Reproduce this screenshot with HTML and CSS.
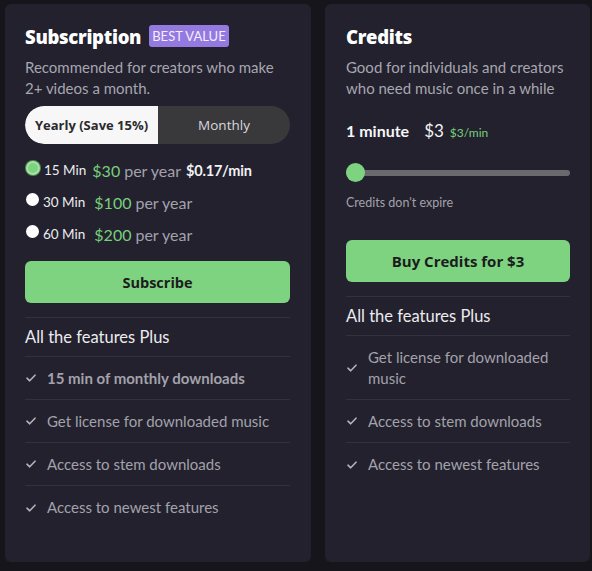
FILE: index.html
```html
<!DOCTYPE html>
<html>
<head>
<meta charset="utf-8">
<link rel="stylesheet" href="styles.css">
</head>
<body>
<div class="wrap">
  <section class="card card-sub">
    <div class="head">
      <h2 class="title">Subscription</h2>
      <span class="badge">BEST VALUE</span>
    </div>
    <p class="desc">Recommended for creators who make 2+ videos a month.</p>
    <div class="toggle">
      <div class="tog tog-on">Yearly (Save 15%)</div>
      <div class="tog tog-off">Monthly</div>
    </div>
    <ul class="plans">
      <li class="plan"><span class="radio radio-on"></span><span class="mins">15 Min</span><span class="price">$30</span><span class="per">per year</span><span class="rate">$0.17/min</span></li>
      <li class="plan"><span class="radio"></span><span class="mins">30 Min</span><span class="price wide">$100</span><span class="per">per year</span></li>
      <li class="plan"><span class="radio"></span><span class="mins">60 Min</span><span class="price wide">$200</span><span class="per">per year</span></li>
    </ul>
    <button class="btn btn-sub">Subscribe</button>
    <div class="plus">All the features Plus</div>
    <ul class="feats">
      <li class="feat strong"><svg class="chk" viewBox="0 0 10 8"><path d="M1 4.2 L3.7 6.8 L9 1.2" /></svg><span>15 min of monthly downloads</span></li>
      <li class="feat"><svg class="chk" viewBox="0 0 10 8"><path d="M1 4.2 L3.7 6.8 L9 1.2" /></svg><span>Get license for downloaded music</span></li>
      <li class="feat"><svg class="chk" viewBox="0 0 10 8"><path d="M1 4.2 L3.7 6.8 L9 1.2" /></svg><span>Access to stem downloads</span></li>
      <li class="feat last"><svg class="chk" viewBox="0 0 10 8"><path d="M1 4.2 L3.7 6.8 L9 1.2" /></svg><span>Access to newest features</span></li>
    </ul>
  </section>
  <section class="card card-cred">
    <div class="head">
      <h2 class="title">Credits</h2>
    </div>
    <p class="desc">Good for individuals and creators who need music once in a while</p>
    <div class="amount"><span class="amt-min">1 minute</span><span class="amt-price">$3</span><span class="amt-rate">$3/min</span></div>
    <div class="slider"><span class="thumb"></span></div>
    <p class="note">Credits don't expire</p>
    <button class="btn btn-buy">Buy Credits for $3</button>
    <div class="plus">All the features Plus</div>
    <ul class="feats">
      <li class="feat"><svg class="chk" viewBox="0 0 10 8"><path d="M1 4.2 L3.7 6.8 L9 1.2" /></svg><span>Get license for downloaded music</span></li>
      <li class="feat"><svg class="chk" viewBox="0 0 10 8"><path d="M1 4.2 L3.7 6.8 L9 1.2" /></svg><span>Access to stem downloads</span></li>
      <li class="feat last"><svg class="chk" viewBox="0 0 10 8"><path d="M1 4.2 L3.7 6.8 L9 1.2" /></svg><span>Access to newest features</span></li>
    </ul>
  </section>
</div>
</body>
</html>
```

FILE: styles.css
```css
* { box-sizing: border-box; }
html, body { margin: 0; padding: 0; }
body {
  background: #16151b;
  font-family: Lato, "Noto Sans", sans-serif;
  width: 592px;
  height: 571px;
  overflow: hidden;
}
.wrap {
  display: flex;
  gap: 14px;
  padding: 4px 2px 0 5px;
}
.card {
  background: #22212d;
  border-radius: 6px;
  height: 558px;
  padding: 20px 21px 0 20px;
}
.card-sub { width: 306px; }
.card-cred { width: 265px; padding-left: 21px; padding-right: 20px; }

.head { display: flex; align-items: center; gap: 8px; height: 26px; }
.title {
  margin: 0;
  font-family: "Open Sans", sans-serif;
  font-weight: 800;
  font-size: 18.5px;
  line-height: 26px;
  color: #ffffff;
  letter-spacing: -0.3px;
}
.badge {
  background: #9479e0;
  color: #f2eefc;
  font-size: 13px;
  height: 22px;
  line-height: 22px;
  padding: 0 3px;
  border-radius: 3px;
  font-family: Lato, sans-serif;
  margin-top: -2px;
}
.desc {
  margin: 7px 0 0 0;
  font-size: 15px;
  line-height: 21px;
  color: #a7a6b0;
}
.toggle {
  margin-top: 7px;
  height: 38px;
  display: flex;
  border-radius: 19px;
  background: #39393c;
  overflow: hidden;
}
.tog {
  display: flex;
  align-items: center;
  justify-content: center;
  font-size: 13px;
}
.tog-on {
  width: 133px;
  background: #f7f7f7;
  color: #2a2a2e;
  font-family: "Open Sans", sans-serif;
  font-weight: 700;
  border-radius: 19px 0 0 19px;
}
.tog-off { flex: 1; color: #d8d8dc; font-family: "Open Sans", sans-serif; font-weight: 500; font-size: 13.5px; }

.plans { list-style: none; margin: 10px 0 0 0; padding: 0; }
.plan {
  height: 32px;
  display: flex;
  align-items: center;
  color: #e6e6ea;
}
.radio {
  width: 13px;
  height: 13px;
  border-radius: 50%;
  background: #ffffff;
  margin: -5px 4px 0 1px;
  flex: none;
}
.radio-on {
  width: 14px;
  height: 14px;
  background: #7dd380;
  border: 2px solid #a6e2a7;
  box-shadow: 0 0 0 1px #4f8a52;
  margin-left: 1px;
}
.mins { font-size: 13.5px; color: #ececf0; margin-right: 6px; }
.price { font-size: 16px; color: #79cf7b; margin-right: 4px; }
.price.wide { margin-left: 3px; }
.per { font-size: 16px; color: #a3a2ab; margin-right: 5px; }
.rate { font-size: 14.5px; font-weight: 700; color: #f2f2f4; letter-spacing: -0.2px; }

.btn {
  display: block;
  width: 100%;
  height: 42px;
  border: none;
  border-radius: 6px;
  background: #7dd380;
  color: #1c1c1e;
  font-family: "Open Sans", sans-serif;
  font-weight: 700;
  font-size: 14.5px;
  padding: 0;
}
.btn-sub { margin-top: 11px; }

.plus {
  margin-top: 14px;
  border-top: 1px solid #32313e;
  border-bottom: 1px solid #32313e;
  height: 40px;
  display: flex;
  align-items: center;
  font-size: 16.5px;
  color: #ececef;
}
.feats { list-style: none; margin: 0; padding: 0; }
.feat {
  display: flex;
  align-items: center;
  min-height: 43px;
  padding: 10px 0;
  border-bottom: 1px solid #32313e;
  font-size: 15px;
  line-height: 21px;
  color: #a3a2ab;
}
.feat.last { border-bottom: none; }
.feat.strong { font-weight: 700; }
.chk {
  width: 10px;
  height: 8px;
  flex: none;
  margin: 0 11px 0 1px;
  fill: none;
  stroke: #b4b3bb;
  stroke-width: 1.6;
  stroke-linecap: round;
  stroke-linejoin: round;
}

.amount { margin-top: 21px; height: 24px; display: flex; align-items: baseline; }
.amt-min { font-size: 16px; font-weight: 700; color: #f6f6f8; margin-right: 15px; }
.amt-price { font-size: 17px; color: #f2f2f4; margin-right: 6px; }
.amt-rate { font-size: 12px; color: #79cf7b; }
.slider {
  margin-top: 19px;
  height: 19px;
  display: flex;
  align-items: center;
  position: relative;
}
.slider::before {
  content: "";
  display: block;
  width: 100%;
  height: 6px;
  border-radius: 3px;
  background: #6a6a6e;
}
.thumb {
  position: absolute;
  left: 0;
  top: 0;
  width: 19px;
  height: 19px;
  border-radius: 50%;
  background: #7dd380;
}
.note { margin: 12px 0 0 0; font-size: 12.5px; line-height: 18px; color: #a3a2ab; }
.btn-buy { margin-top: 28px; font-size: 15px; }
.card-cred .feat:first-child { padding-top: 11px; }
```
